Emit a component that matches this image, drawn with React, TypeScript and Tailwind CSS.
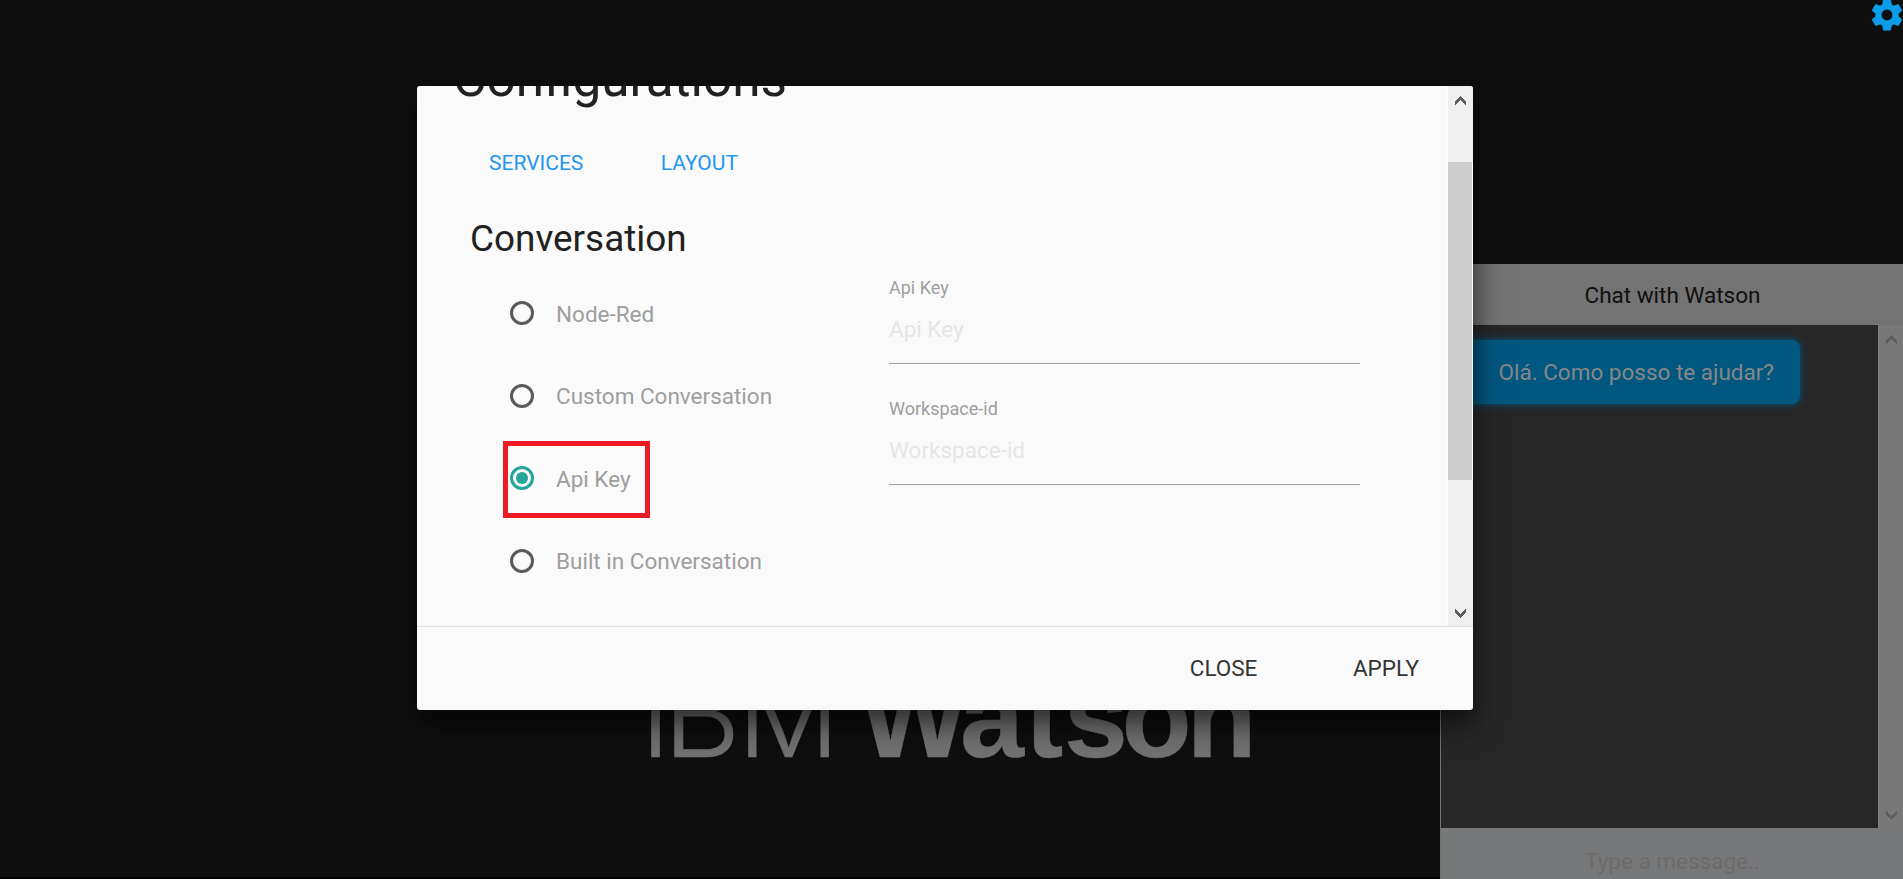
function Gear() {
  return (
    <svg className="absolute -top-1 left-[1868px] size-[38px] text-[#0b9cea]" viewBox="0 0 24 24" fill="currentColor" stroke="currentColor" strokeWidth="0.4">
      <path d="M19.14 12.94c.04-.3.06-.61.06-.94 0-.32-.02-.64-.07-.94l2.03-1.58a.49.49 0 0 0 .12-.61l-1.92-3.32a.488.488 0 0 0-.59-.22l-2.39.96c-.5-.38-1.03-.7-1.62-.94l-.36-2.54a.484.484 0 0 0-.48-.41h-3.84c-.24 0-.43.17-.47.41l-.36 2.54c-.59.24-1.13.57-1.62.94l-2.39-.96c-.22-.08-.47 0-.59.22L2.74 8.87c-.12.21-.08.47.12.61l2.03 1.58c-.05.3-.09.63-.09.94s.02.64.07.94l-2.03 1.58a.49.49 0 0 0-.12.61l1.92 3.32c.12.22.37.29.59.22l2.39-.96c.5.38 1.03.7 1.62.94l.36 2.54c.05.24.24.41.48.41h3.84c.24 0 .44-.17.47-.41l.36-2.54c.59-.24 1.13-.56 1.62-.94l2.39.96c.22.08.47 0 .59-.22l1.92-3.32c.12-.22.07-.47-.12-.61l-2.01-1.58zM12 15.6c-1.98 0-3.6-1.62-3.6-3.6s1.62-3.6 3.6-3.6 3.6 1.62 3.6 3.6-1.62 3.6-3.6 3.6z" />
    </svg>
  );
}

function Logo() {
  return (
    <svg className="absolute left-[640px] top-[660px] blur-[0.7px]" width="640" height="110" viewBox="0 0 640 110" fill="#727272">
      <text y="96.5" fontFamily="Inter, sans-serif" fontWeight="300" fontSize="113" stroke="#727272" strokeWidth="0.7">
        <tspan x="0.8">I</tspan><tspan x="23.3" fontSize="119">B</tspan><tspan x="97.7">M</tspan>
      </text>
      <text x="219.5 320 385 424 481.5 546.5" y="96.5" fontFamily="Liberation Sans, sans-serif" fontWeight="700" fontSize="115" stroke="#727272" strokeWidth="0.4">Watson</text>
    </svg>
  );
}

function Chevron({ up = false, color }: { up?: boolean; color: string }) {
  return (
    <svg width="11" height="9" viewBox="0 0 11 9" shapeRendering="crispEdges" className={up ? "rotate-180" : ""}>
      <path d="M0 0 L5.5 5 L11 0 V3.5 L5.5 9 L0 3.5 Z" fill={color} />
    </svg>
  );
}

const options = ["Node-Red", "Custom Conversation", "Api Key", "Built in Conversation"];
const selected = "Api Key";

function Radio({ label }: { label: string }) {
  const on = label === selected;
  return (
    <div className="relative flex h-[82.5px] items-start">
      {on && <div className="absolute -left-[7px] -top-[25px] h-[77px] w-[147px] border-[5px] border-[#ed1c24]" />}
      <span className={`flex size-6 items-center justify-center rounded-full border-[3px] ${on ? "border-[#26a69a]" : "border-[#5a5a5a]"}`}>
        {on && <span className="size-3 rounded-full bg-[#26a69a]" />}
      </span>
      <span className="-mt-[0.25px] ml-[22px] text-[22.5px] leading-[26px] text-[#9e9e9e]">{label}</span>
    </div>
  );
}

function Field({ label }: { label: string }) {
  return (
    <div className="flex h-[121px] flex-col">
      <span className="text-[18px] leading-[22px] text-[#9e9e9e]">{label}</span>
      <span className="mt-[13px] flex-none text-[22.5px] leading-[34px] text-[#e5e5e5]">{label}</span>
      <div className="mt-[17px] h-px w-[471px] flex-none bg-[#9e9e9e]" />
    </div>
  );
}

export default function App() {
  return (
    <div className="relative h-[879px] w-[1903px] overflow-hidden bg-[#0f0f0f] font-['Roboto',sans-serif]">
      <div className="absolute bottom-0 left-0 h-[2px] w-[1440px] bg-[#060306]" />
      <Gear />
      <Logo />

      <aside className="absolute left-[1440px] top-[264px] flex h-[615px] w-[463px] flex-col overflow-hidden border-l border-[#737373]">
        <header className="flex h-[61px] flex-none items-center justify-center bg-[#737373] pl-px pt-0.5 text-[22.5px] text-[#0f0f0f]">Chat with Watson</header>
        <div className="flex h-[503px] flex-none">
          <div className="w-[437px] bg-[#272727] pl-[12px] pt-[15px]">
            <div className="flex h-16 w-[347px] items-center justify-end rounded-lg bg-[#005780] pr-[26px] pt-0.5 text-[22.5px] text-[#878787] shadow-[0_0_9px_#005780]">Olá. Como posso te ajudar?</div>
          </div>
          <div className="flex w-[25px] flex-col items-center justify-between border-l border-[#7e7e7e] bg-[#787878] pb-2 pt-2.5">
            <Chevron up color="#5d5d5d" />
            <Chevron color="#5d5d5d" />
          </div>
        </div>
        <div className="flex flex-1 justify-center bg-[#77787a] pl-px pt-[20px] text-[22.5px] leading-[26px] text-[#6b6b6c]">Type a message..</div>
      </aside>

      <section className="absolute left-[417px] top-[86px] flex h-[624px] w-[1056px] flex-col overflow-hidden rounded-[3px] bg-[#fafafa] shadow-[0_12px_23px_1px_rgba(0,0,0,0.5),0_16px_40px_4px_rgba(0,0,0,0.15)]">
        <div className="flex h-[540px] flex-none overflow-hidden">
          <div className="flex flex-1 flex-col">
            <h4 className="-mt-[37px] flex-none pl-[36px] text-[51.3px] leading-[60px] text-[#212121]">Configurations</h4>
            <nav className="mt-[41px] flex flex-none gap-[77.5px] pl-[72px] text-[21px] leading-[26px] text-[#2196f3]">
              <span>SERVICES</span>
              <span>LAYOUT</span>
            </nav>
            <h5 className="mt-[41px] flex-none pl-[53px] text-[36.9px] leading-[44px] text-[#212121]">Conversation</h5>
            <div className="flex flex-none">
              <div className="w-[379px] flex-none pl-[93px] pt-[40px]">
                {options.map((o) => <Radio key={o} label={o} />)}
              </div>
              <div className="ml-[93px] pt-[16px]">
                <Field label="Api Key" />
                <Field label="Workspace-id" />
              </div>
            </div>
          </div>
          <div className="flex w-[26px] flex-none flex-col items-center border-l border-white bg-[#efefef] pt-2.5">
            <Chevron up color="#5f5f5f" />
            <div className="mt-[57px] h-[318px] w-[25px] border-r border-white bg-[#cdcdcd]" />
            <div className="mb-2 mt-auto"><Chevron color="#5f5f5f" /></div>
          </div>
        </div>
        <footer className="flex flex-1 items-center justify-end gap-[95.5px] border-t border-[#e0e0e0] pr-[54px] text-[22.5px] text-[#343434]">
          <button>CLOSE</button>
          <button>APPLY</button>
        </footer>
      </section>
    </div>
  );
}
